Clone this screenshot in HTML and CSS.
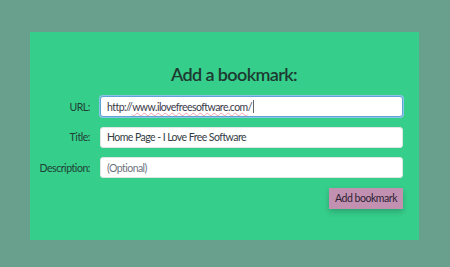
FILE: index.html
```html
<!DOCTYPE html>
<html lang="en">
<head>
    <meta charset="UTF-8">
    <title>Add a bookmark</title>
    <link rel="stylesheet" href="styles.css">
</head>
<body>
    <div class="card">
        <h1>Add a bookmark:</h1>
        <form class="bookmark-form">
            <label for="url">URL:</label>
            <div class="field focused" id="url"><span>http://</span><span class="misspelt">www.ilovefreesoftware.com</span><span>/</span><span class="caret"></span></div>

            <label for="title">Title:</label>
            <input class="field" id="title" type="text" value="Home Page - I Love Free Software">

            <label for="desc">Description:</label>
            <input class="field" id="desc" type="text" placeholder="(Optional)">

            <div class="actions">
                <button type="button">Add bookmark</button>
            </div>
        </form>
    </div>
</body>
</html>
```

FILE: styles.css
```css
body { margin: 0; padding: 32px 31px 27px 30px; background: #68a08d; font-family: Lato, sans-serif; }
.card { background: #36ce8b; height: 208px; box-sizing: border-box; padding: 30px 16px 0 5px; }
h1 { margin: 0 0 10px 0; padding-left: 30px; text-align: center; font-size: 18px; font-weight: 600; letter-spacing: -0.6px; color: #1d3a31; line-height: 24px; }
.bookmark-form { display: grid; grid-template-columns: 55px 1fr; grid-auto-rows: 21px; column-gap: 10px; row-gap: 9.5px; align-items: center; }
label { text-align: right; font-size: 10.5px; letter-spacing: -0.45px; color: #1f4034; }
.field { box-sizing: border-box; height: 21px; margin: 0; padding: 0 6px; border: 1px solid #e0e6e3; border-radius: 3px; background: #fff; font-family: Lato, sans-serif; font-size: 10.5px; letter-spacing: -0.55px; color: #333d44; display: flex; align-items: center; outline: none; }
.field::placeholder { color: #6c757d; }
.focused { border: 1px solid #5aa4d6; box-shadow: 0 0 0 1px #8fc4e6; color: #3a3a4a; }
.misspelt { text-decoration: underline wavy #f5a3a3; text-decoration-thickness: 1px; text-underline-offset: 1px; }
.caret { display: inline-block; width: 1px; height: 13px; background: #666; margin-left: 1px; }
.actions { grid-column: 2; display: flex; justify-content: flex-end; }
button { height: 21px; width: 74px; padding: 0; border: none; background: #c291b1; color: #2c2233; font-family: Lato, sans-serif; font-size: 10.5px; letter-spacing: -0.45px; box-shadow: 0 3px 6px rgba(0,0,0,0.2); }
```
